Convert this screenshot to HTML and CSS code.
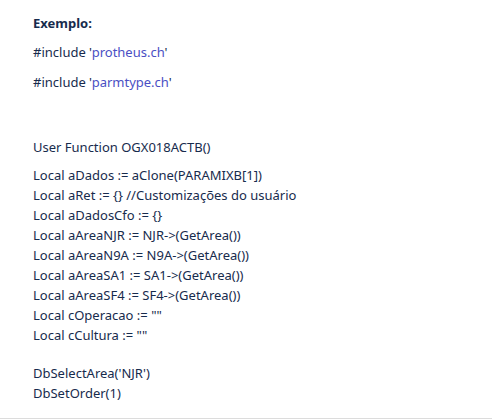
FILE: index.html
```html
<!DOCTYPE html>
<html lang="pt">
<head>
<meta charset="utf-8">
<link rel="stylesheet" href="styles.css">
</head>
<body>
<div class="page">
  <p class="line title"><strong>Exemplo:</strong></p>
  <p class="line inc first">#include '<span class="str">protheus.ch</span>'</p>
  <p class="line inc">#include '<span class="str">parmtype.ch</span>'</p>
  <p class="line fn">User Function OGX018ACTB()</p>
  <p class="line block">Local aDados := aClone(PARAMIXB[1])<br>Local aRet := {} //Customizações do usuário<br>Local aDadosCfo := {}<br>Local aAreaNJR := NJR-&gt;(GetArea())<br>Local aAreaN9A := N9A-&gt;(GetArea())<br>Local aAreaSA1 := SA1-&gt;(GetArea())<br>Local aAreaSF4 := SF4-&gt;(GetArea())<br>Local cOperacao := ""<br>Local cCultura := ""</p>
  <p class="line block2">DbSelectArea('NJR')<br>DbSetOrder(1)</p>
</div>
</body>
</html>
```

FILE: styles.css
```css
html, body {
  margin: 0;
  padding: 0;
  background: #ffffff;
}
.page {
  box-sizing: border-box;
  height: 419px;
  border-bottom: 1px solid #dcdcdc;
  padding: 13px 0 0 33px;
  font-family: "Noto Sans", "Open Sans", sans-serif;
  font-size: 13px;
  line-height: 20px;
  color: #172b4d;
}
.line {
  margin: 0;
}
.title strong {
  font-weight: 700;
}
.line.inc.first {
  margin-top: 9px;
}
.line.inc {
  margin-top: 10px;
}
.str {
  color: #4a4fc4;
}
.line.fn {
  margin-top: 45px;
}
.line.block {
  margin-top: 8px;
}
.line.block2 {
  margin-top: 18px;
}
```
